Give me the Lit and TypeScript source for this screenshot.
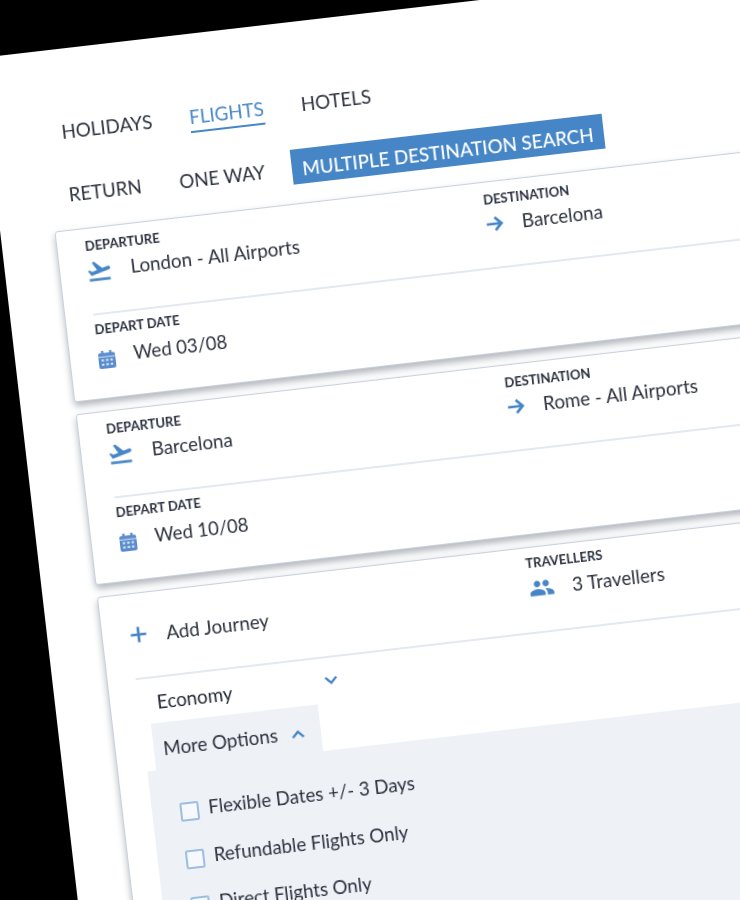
import { LitElement, html, css, svg } from "lit";
import { customElement } from "lit/decorators.js";

const plane = svg`<path d="M2.5 19h19v2h-19zm19.57-9.36c-.21-.8-1.04-1.28-1.84-1.06L14.92 10l-6.9-6.43-1.93.51 4.14 7.17-4.97 1.33-1.97-1.54-1.45.39 1.82 3.16.77 1.33 1.6-.43 5.31-1.42 4.35-1.16L21 11.49c.81-.23 1.28-1.05 1.07-1.85z"/>`;
const people = svg`<path d="M16 11c1.66 0 2.99-1.34 2.99-3S17.66 5 16 5c-1.66 0-3 1.34-3 3s1.34 3 3 3zm-8 0c1.66 0 2.99-1.34 2.99-3S9.66 5 8 5C6.34 5 5 6.34 5 8s1.34 3 3 3zm0 2c-2.33 0-7 1.17-7 3.5V19h14v-2.5c0-2.33-4.67-3.5-7-3.5zm8 0c-.29 0-.62.02-.97.05 1.16.84 1.97 1.97 1.97 3.45V19h6v-2.5c0-2.33-4.67-3.5-7-3.5z"/>`;

const planeIcon = html`<svg class="ic plane" viewBox="0 0 24 24">${plane}</svg>`;
const peopleIcon = html`<svg class="ic people" viewBox="0 0 24 24">${people}</svg>`;
const arrowIcon = html`<svg class="ic arrow" viewBox="0 0 18 18"><path d="M2 9h13M9.5 3.2 15.3 9l-5.8 5.8" fill="none" stroke-width="2.4"/></svg>`;
const plusIcon = html`<svg class="ic plus" viewBox="0 0 18 18"><path d="M9 2v14M2 9h14" fill="none" stroke-width="2.4"/></svg>`;
const calendarIcon = html`<svg class="ic cal" viewBox="0 0 18 20">
  <path d="M3.5 1h2.4v2.4H12V1h2.4v2.4H16a2 2 0 0 1 2 2V7H0V5.400a2 2 0 0 1 2-2h1.500z"/>
  <path d="M0 8h18v10a2 2 0 0 1-2 2H2a2 2 0 0 1-2-2z"/>
  <g fill="#dbe6f5">
    <rect x="3" y="10" width="2.600" height="2.200"/><rect x="7.700" y="10" width="2.600" height="2.200"/><rect x="12.400" y="10" width="2.600" height="2.200"/>
    <rect x="3" y="14.600" width="2.600" height="2.200"/><rect x="7.700" y="14.600" width="2.600" height="2.200"/><rect x="12.400" y="14.600" width="2.600" height="2.200"/>
  </g></svg>`;
const chevDown = html`<svg class="chev" viewBox="0 0 14 9"><path d="M1.500 1.500 7 7l5.500-5.500" fill="none" stroke-width="2.400"/></svg>`;
const chevUp = html`<svg class="chev" viewBox="0 0 14 9"><path d="M1.500 7.500 7 2l5.500 5.500" fill="none" stroke-width="2.400"/></svg>`;

interface Journey { from: string; to: string; date: string; }

@customElement("app-root")
export class AppRoot extends LitElement {
  static styles = css`
    :host {
      display: block;
      width: 740px;
      height: 900px;
      overflow: hidden;
      background: #000;
      font-family: "Lato", "Liberation Sans", sans-serif;
      color: #2c313e;
    }
    .frame { width: 740px; height: 900px; overflow: hidden; padding-top: 58.3px; box-sizing: border-box; }
    .sheet {
      width: 1000px;
      height: 1100px;
      margin-left: -19.7px;
      box-sizing: border-box;
      padding: 71.5px 0 0 53.5px;
      background: #fff;
      transform: rotate(-6.62deg);
      transform-origin: 0 0;
      filter: blur(0.5px);
    }
    .tabs { display: flex; gap: 37.500px; padding-left: 19px; font-size: 18.800px; line-height: 22px; height: 27px; }
    .tab { height: 26px; box-sizing: border-box; }
    .tab.on { color: #4686c6; border-bottom: 2px solid #4686c6; height: 27px; }
    .modes { display: flex; gap: 38px; align-items: flex-start; padding-left: 19px; margin-top: 28.500px; font-size: 18.700px; line-height: 22px; height: 35px; }
    .mode { padding-top: 8px; }
    .mode.on {
      background: #4686c6;
      color: #fff;
      font-size: 18.800px;
      font-weight: 500;
      height: 35px;
      box-sizing: border-box;
      padding: 9px 10px 0;
      margin-left: -10.500px;
      white-space: nowrap;
    }
    .card {
      width: 840px;
      height: 172px;
      box-sizing: border-box;
      margin-bottom: 12px;
      border: 1px solid #c9d0dc;
      border-radius: 3px;
      background: #fff;
      box-shadow: 0 4px 7px rgba(40, 50, 70, 0.36);
      overflow: hidden;
    }
    .card:first-of-type { margin-top: 19px; }
    .card.last { height: 500px; }
    .top { display: grid; grid-template-columns: 401px 1fr; height: 85px; box-sizing: border-box; padding: 9px 0 0 28px; }
    .last .top { padding-top: 6.500px; height: 83.500px; }
    .label { font-size: 13px; line-height: 16px; font-weight: 700; color: #2b3140; white-space: nowrap; }
    .value { display: flex; align-items: flex-start; font-size: 18.800px; line-height: 22px; margin-top: 5.500px; white-space: nowrap; }
    .divider { height: 2px; background: #e3e8f1; margin-left: 28px; }
    .date { padding: 6px 0 0 28px; }
    .date .value { margin-top: 7.500px; font-size: 18.500px; }
    .ic { fill: #4686c6; stroke: #4686c6; stroke-width: 0; flex: none; display: block; }
    .plane { width: 26px; height: 26px; margin: -0.500px 19px 0 -2px; stroke-width: 0.4; }
    .arrow { width: 20px; height: 20px; margin: 1.500px 18px 0 -2px; }
    .cal { width: 17px; height: 19px; margin: 5px 19px 0 0; fill: #5a8ccd; stroke-width: 0; }
    .people { width: 26px; height: 26px; margin: -1.500px 18px 0 0; }
    .plus { width: 20px; height: 20px; margin: 0.500px 17.600px 0 -1.300px; }
    .last .value { margin-top: 7px; }
    .last .value.add { margin-top: 24px; }
    .economy { display: flex; align-items: flex-start; height: 32.500px; padding: 13px 0 0 47px; font-size: 18.800px; line-height: 22px; color: #1f2430; }
    .economy span { width: 168.500px; }
    .economy .chev { margin-top: 5px; }
    .chev { width: 14px; height: 9px; stroke: #4686c6; fill: none; flex: none; display: block; }
    .more {
      display: flex;
      align-items: flex-start;
      width: 168px;
      height: 47px;
      box-sizing: border-box;
      margin-left: 38px;
      padding: 15px 0 0 10px;
      background: #eef1f6;
      font-size: 18.800px;
      line-height: 22px;
    }
    .more span { width: 128px; white-space: nowrap; }
    .more .chev { margin-top: 8px; }
    .panel { margin-left: 29px; height: 300px; background: #eef1f6; padding: 31px 0 0 28px; box-sizing: border-box; }
    .check { display: flex; align-items: flex-start; height: 47.500px; font-size: 18.700px; line-height: 22px; white-space: nowrap; }
    .box { width: 19px; height: 19px; box-sizing: border-box; border: 2px solid #9cbde2; border-radius: 2px; margin: 4.300px 10px 0 0; background: #f6f8fb; flex: none; }
  `;

  private journeys: Journey[] = [
    { from: "London - All Airports", to: "Barcelona", date: "Wed 03/08" },
    { from: "Barcelona", to: "Rome - All Airports", date: "Wed 10/08" },
  ];

  private journeyCard(j: Journey) {
    return html`<section class="card">
      <div class="top">
        <div>
          <div class="label">DEPARTURE</div>
          <div class="value">${planeIcon}<span>${j.from}</span></div>
        </div>
        <div>
          <div class="label">DESTINATION</div>
          <div class="value">${arrowIcon}<span>${j.to}</span></div>
        </div>
      </div>
      <div class="divider"></div>
      <div class="date">
        <div class="label">DEPART DATE</div>
        <div class="value">${calendarIcon}<span>${j.date}</span></div>
      </div>
    </section>`;
  }

  render() {
    return html`<div class="frame"><div class="sheet">
      <nav class="tabs">
        <div class="tab">HOLIDAYS</div>
        <div class="tab on">FLIGHTS</div>
        <div class="tab">HOTELS</div>
      </nav>
      <nav class="modes">
        <div class="mode">RETURN</div>
        <div class="mode">ONE WAY</div>
        <div class="mode on">MULTIPLE DESTINATION SEARCH</div>
      </nav>
      ${this.journeys.map((j) => this.journeyCard(j))}
      <section class="card last">
        <div class="top">
          <div><div class="value add">${plusIcon}<span>Add Journey</span></div></div>
          <div>
            <div class="label">TRAVELLERS</div>
            <div class="value">${peopleIcon}<span>3 Travellers</span></div>
          </div>
        </div>
        <div class="divider"></div>
        <div class="economy"><span>Economy</span>${chevDown}</div>
        <div class="more"><span>More Options</span>${chevUp}</div>
        <div class="panel">
          <label class="check"><div class="box"></div>Flexible Dates +/- 3 Days</label>
          <label class="check"><div class="box"></div>Refundable Flights Only</label>
          <label class="check"><div class="box"></div>Direct Flights Only</label>
        </div>
      </section>
    </div></div>`;
  }
}
